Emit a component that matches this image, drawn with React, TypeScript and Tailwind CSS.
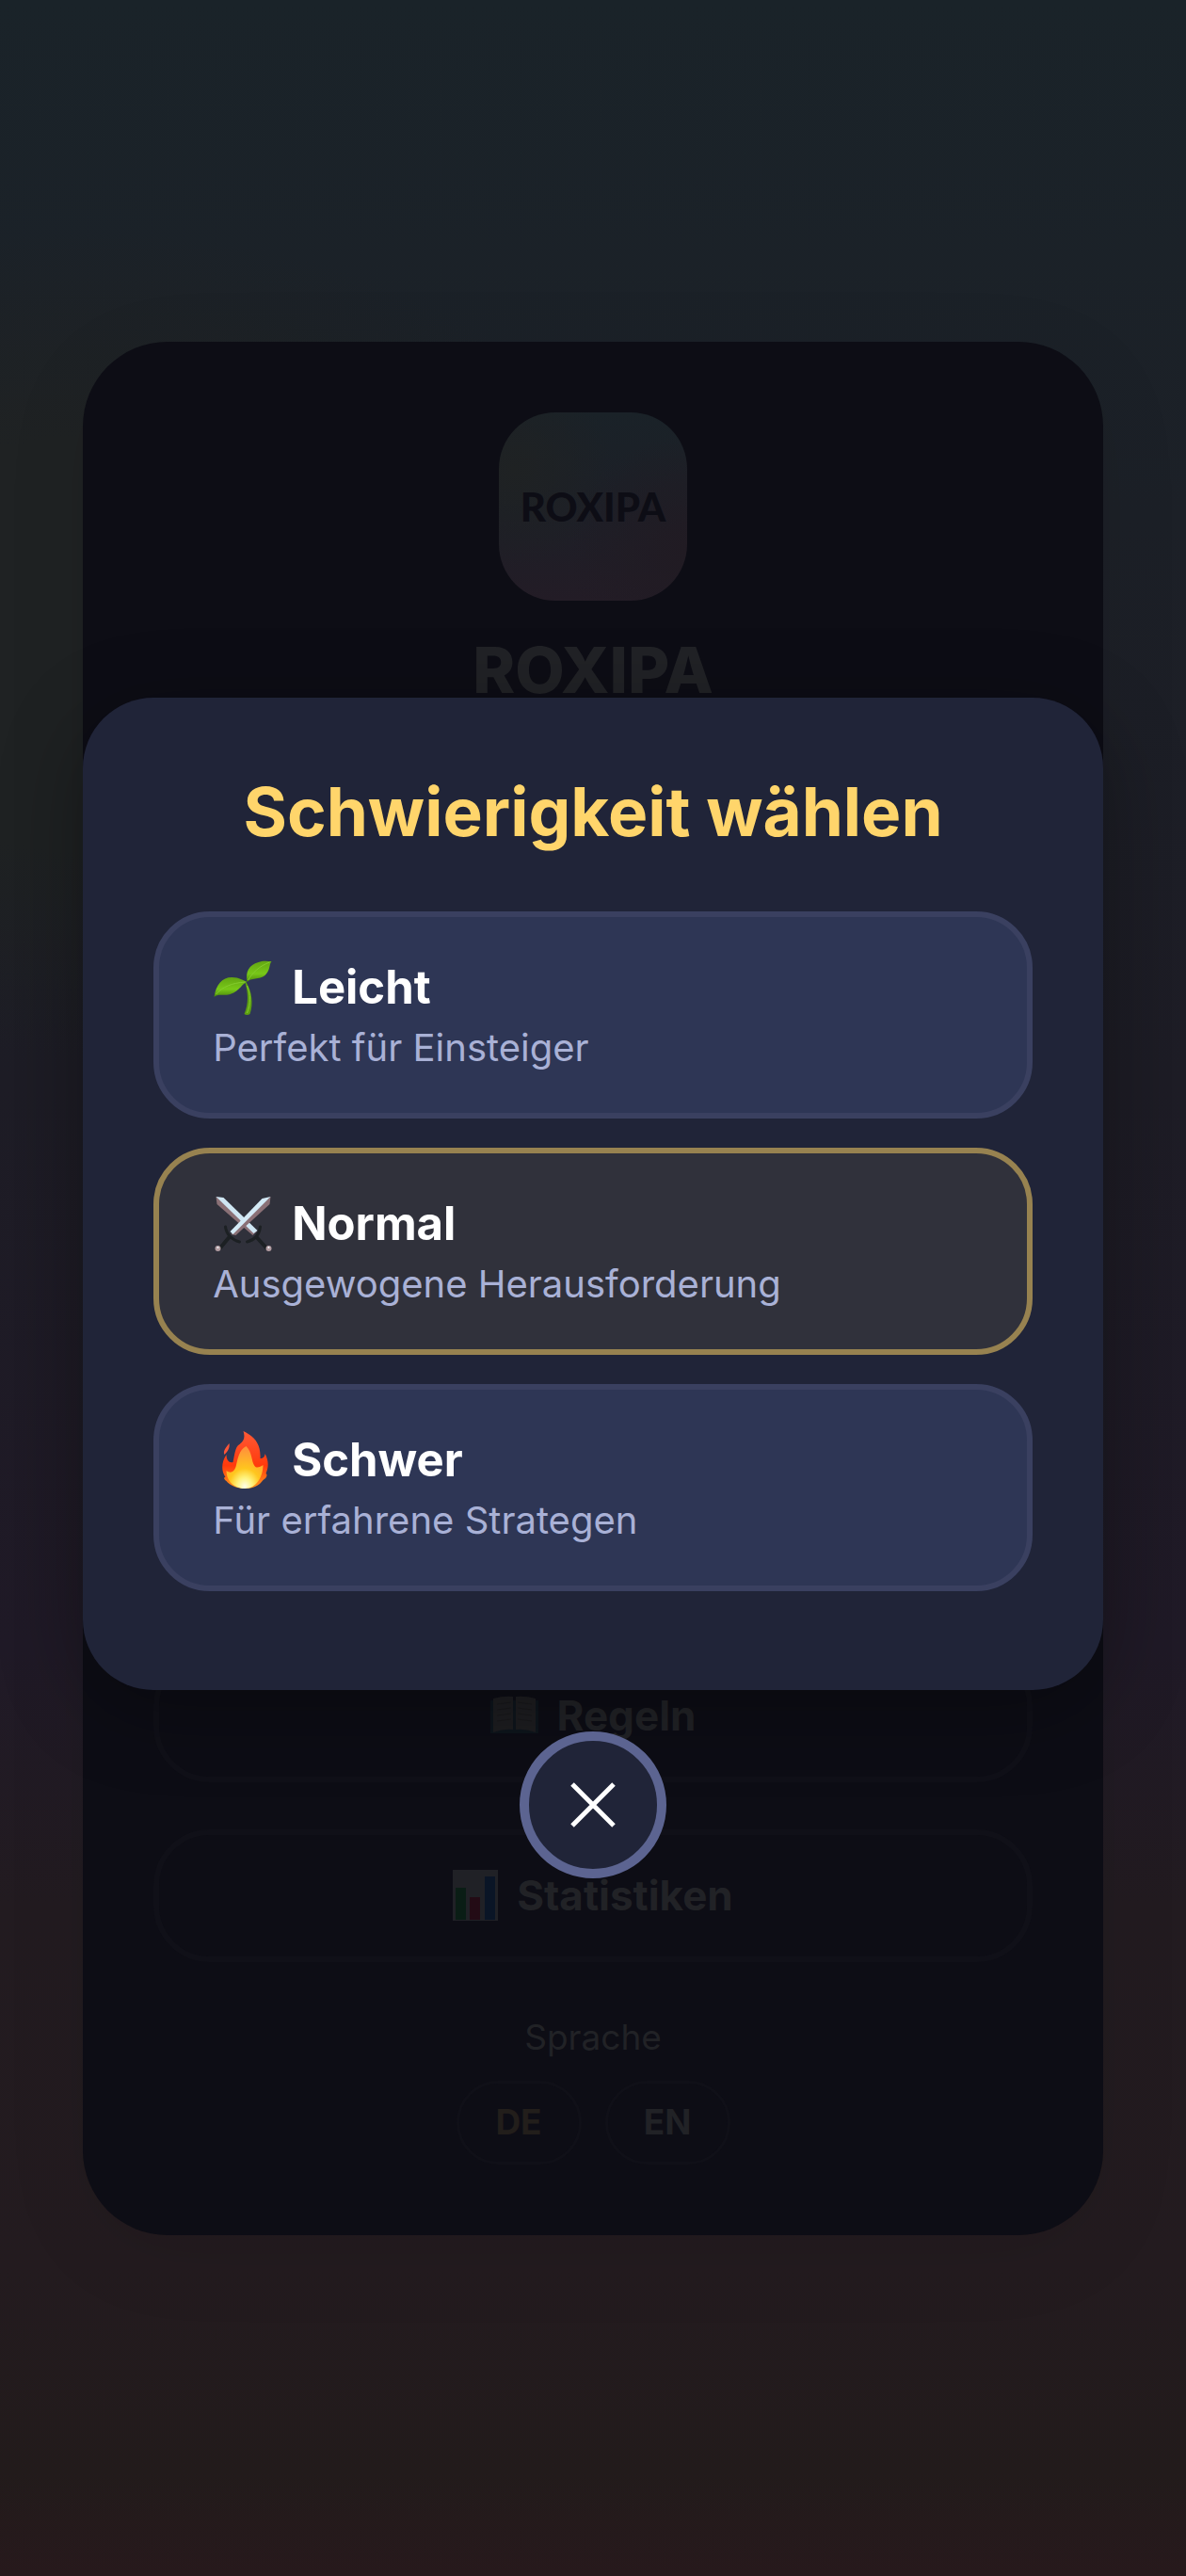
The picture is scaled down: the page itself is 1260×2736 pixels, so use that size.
import React, { useState } from 'react';

const SeedlingIcon: React.FC = () => (
  <svg width="64" height="60" viewBox="0 0 63 60" aria-hidden="true">
    <defs>
      <linearGradient id="leaf" x1="0" y1="0" x2="0" y2="1">
        <stop offset="0" stopColor="#62a512" />
        <stop offset="0.6" stopColor="#78c818" />
        <stop offset="1" stopColor="#4a860c" />
      </linearGradient>
    </defs>
    <path d="M35 24 C41 34 43 47 39 58 Q36 60 33 58 C38 47 37 35 34 25 Z" fill="#5c9e12" />
    <path d="M36 28 C40 37 40 47 36 57" stroke="#86cf2a" strokeWidth="1" fill="none" />
    <path d="M1 40 C3 27 9 19 20 19 C27 19 31 22 36 24 C31 25 28 34 18 37 C10 39 5 36 1 40 Z" fill="url(#leaf)" />
    <path d="M36 24 C34 13 38 6 48 3 C53 1 58 2 62 2 C59 6 61 11 55 17 C49 22 40 19 36 24 Z" fill="url(#leaf)" />
    <path d="M3 37 C10 29 20 25 34 24 M37 22 C42 14 49 7 60 3" stroke="#84cb2e" strokeWidth="1" fill="none" />
  </svg>
);

const SwordsIcon: React.FC = () => (
  <svg width="64" height="60" viewBox="0 0 63 60" aria-hidden="true">
    <path d="M17 44 L7 56 M46 44 L57 56" stroke="#1c2023" strokeWidth="4" />
    <path d="M3 1 L4 9 L42 42 L46 38 Z" fill="#8a7076" />
    <path d="M3 1 L11 2 L47 37 L43 40 Z" fill="#cfe6f3" />
    <path d="M61 1 L60 9 L24 42 L19 41 Z" fill="#8a7076" />
    <path d="M61 1 L52 3 L18 38 L21 41 Z" fill="#d4eaf6" />
    <path d="M13 33 C14 41 20 47 28 49 M50 33 C49 41 44 47 36 49" stroke="#1c2023" strokeWidth="3" strokeLinecap="round" fill="none" />
    <circle cx="5" cy="56" r="3" fill="#b09ba0" />
    <circle cx="59" cy="56" r="3" fill="#b09ba0" />
    <circle cx="5" cy="55" r="1" fill="#f0f4f8" />
    <circle cx="59" cy="55" r="1" fill="#f0f4f8" />
  </svg>
);

const FireIcon: React.FC = () => (
  <svg width="64" height="62" viewBox="0 0 63 62" aria-hidden="true">
    <defs>
      <linearGradient id="outerFlame" x1="0" y1="0" x2="0" y2="1">
        <stop offset="0" stopColor="#ff5a36" />
        <stop offset="0.6" stopColor="#ff3a0c" />
        <stop offset="1" stopColor="#ff9a1e" />
      </linearGradient>
      <radialGradient id="innerFlame" cx="0.5" cy="0.95" r="0.85">
        <stop offset="0" stopColor="#fffde8" />
        <stop offset="0.25" stopColor="#fff27a" />
        <stop offset="0.5" stopColor="#ffc61e" />
        <stop offset="1" stopColor="#ff9838" />
      </radialGradient>
    </defs>
    <path d="M17 13 C18 18 15 22 12 25 C10 21 14 17 17 13 Z" fill="#ff5638" />
    <path
      d="M32 0 C42 5 51 12 50 29 C53 29 55 27 55 24 C59 31 59 38 56 45 C58 46 57 50 53 52 C49 58 42 61 34 61 C26 61 18 58 14 53 C11 51 11 49 13 49 C8 41 9 33 14 25 C14 31 17 34 21 33 C23 25 23 17 28 14 C33 10 34 6 32 0 Z"
      fill="url(#outerFlame)"
    />
    <path
      d="M35 16 C42 23 40 31 44 37 C46 40 50 38 53 36 C53 48 46 61 34 61 C22 61 14 53 14 42 C18 45 22 44 24 38 C26 30 27 20 35 16 Z"
      fill="url(#innerFlame)"
    />
  </svg>
);

const BookIcon: React.FC = () => (
  <svg width="51" height="44" viewBox="0 0 51 44" aria-hidden="true">
    <path d="M0 6 H51 V41 H0 Z" fill="#0e151c" />
    <path d="M3 4 Q14 1 24 2 V37 Q14 36 3 40 Z" fill="#1d1d20" />
    <path d="M48 4 Q37 1 27 2 V37 Q37 36 48 40 Z" fill="#1d1d20" />
    <path d="M7 10 L22 8 M7 16 L22 14 M7 22 L22 20 M7 28 L22 26 M29 8 L44 10 M29 14 L44 16 M29 20 L44 22 M29 26 L44 28" stroke="#18181b" strokeWidth="1" />
  </svg>
);

const ChartIcon: React.FC = () => (
  <svg width="48" height="54" viewBox="0 0 48 54" aria-hidden="true">
    <path d="M0 0 H48 V54 H0 Z" fill="#202126" />
    <path d="M3 19 H14 V53 H3 Z" fill="#0a1d15" />
    <path d="M18 29 H29 V53 H18 Z" fill="#230b15" />
    <path d="M34 7 H45 V53 H34 Z" fill="#0a1526" />
  </svg>
);

const levels = [
  { id: 'easy', name: 'Leicht', hint: 'Perfekt für Einsteiger', Icon: SeedlingIcon },
  { id: 'normal', name: 'Normal', hint: 'Ausgewogene Herausforderung', Icon: SwordsIcon },
  { id: 'hard', name: 'Schwer', hint: 'Für erfahrene Strategen', Icon: FireIcon },
];

const StartCard: React.FC = () => (
  <main className="flex w-full flex-col items-center rounded-[90px] bg-[#0d0d15] p-[75px] text-[#212226] shadow-[0_20px_90px_rgba(0,0,0,0.08)]">
    <div className="flex size-[200px] items-center justify-center rounded-[60px] bg-[radial-gradient(circle_at_8%_30%,#1f2223_0%,#1f222300_45%),radial-gradient(circle_at_100%_75%,#211b23_0%,#211b2300_50%),linear-gradient(to_bottom,#1a2228,#1d1f27_55%,#231c26)]">
      <span className="font-[Lato,sans-serif] text-[42px] leading-[48px] font-black text-[#0d0d15]">ROXIPA</span>
    </div>
    <h1 className="mt-[32px] text-[68px] leading-[82px] font-extrabold">ROXIPA</h1>

    <nav className="mt-[1000px] flex w-full flex-col gap-[50px]">
      <button className="flex h-[141px] items-center justify-center gap-[20px] rounded-[60px] border-6 border-[#101018] text-[44px] leading-[54px] font-bold">
        <BookIcon />
        Regeln
      </button>
      <button className="flex h-[141px] items-center justify-center gap-[20px] rounded-[60px] border-6 border-[#101018] text-[44px] leading-[54px] font-bold">
        <ChartIcon />
        Statistiken
      </button>
    </nav>

    <p className="mt-[58px] text-[37px] leading-[44px]">Sprache</p>
    <div className="mt-[24px] flex gap-[25px] text-[37px] leading-[44px] font-bold">
      <button className="h-[89px] w-[133px] rounded-full border-3 border-[#101018] text-[#221e1b]">DE</button>
      <button className="h-[89px] w-[133px] rounded-full border-3 border-[#101018]">EN</button>
    </div>
  </main>
);

export default function App() {
  const [selected, setSelected] = useState('normal');

  return (
    <div className="relative flex min-h-screen items-center bg-[radial-gradient(50%_16%_at_8%_25%,#1f2223_0%,#1f2223_50%,#1f222300_100%),linear-gradient(to_bottom,#1a2329_0%,#1c2027_20%,#1e1d26_42%,#201a27_64%,#221b20_74%,#231b1f_88%,#221b1b_96%,#27191c_100%)] px-[7%] font-[Inter,sans-serif]">
      <StartCard />

      <div className="absolute inset-0 flex flex-col items-center justify-center gap-[44px] px-[7%]">
        <section
          role="dialog"
          aria-labelledby="difficulty-title"
          className="w-full rounded-[75px] bg-[#202438] px-[75px] pt-[75px] pb-[105px] shadow-[0_20px_90px_rgba(0,0,0,0.3)]"
        >
          <h2 id="difficulty-title" className="text-center text-[71px] leading-[92px] font-bold text-[#ffd56b]">
            Schwierigkeit wählen
          </h2>

          <div className="mt-[60px] flex flex-col gap-[31px]">
            {levels.map(({ id, name, hint, Icon }) => (
              <button
                key={id}
                aria-pressed={id === selected}
                onClick={() => setSelected(id)}
                className={`rounded-[60px] border-6 px-[57px] py-[45px] text-left ${
                  id === selected ? 'border-[#978250] bg-[#30313b]' : 'border-[#3a4060] bg-[#2e3655]'
                }`}
              >
                <span className="flex h-[60px] items-center gap-[20px] text-[49px] leading-[60px] font-bold text-white">
                  <Icon />
                  {name}
                </span>
                <span className="mt-[10px] block text-[40px] leading-[48px] text-[#a9b1d6]">{hint}</span>
              </button>
            ))}
          </div>
        </section>

        <button
          aria-label="Schließen"
          className="flex size-[156px] items-center justify-center rounded-full border-10 border-[#5c6491] bg-[#202438]"
        >
          <svg width="48" height="48" viewBox="0 0 48 48" stroke="#fff" strokeWidth="5" aria-hidden="true">
            <path d="M2 2 L46 46 M46 2 L2 46" />
          </svg>
        </button>
      </div>
    </div>
  );
}
